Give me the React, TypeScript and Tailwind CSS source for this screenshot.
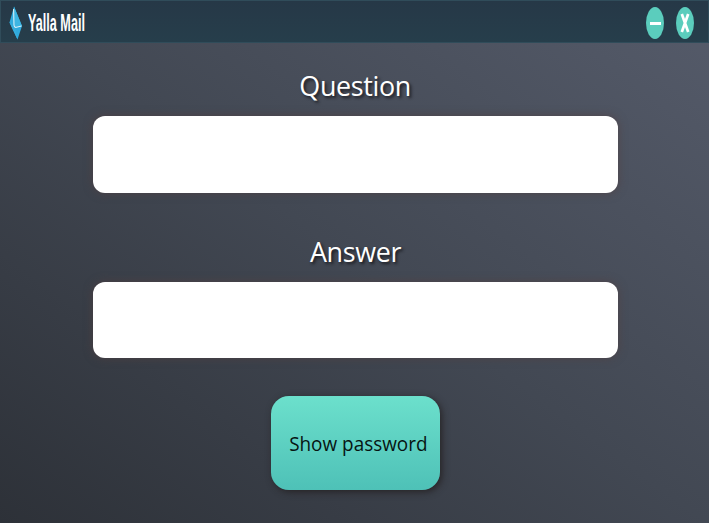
import React from "react";

function Logo() {
  return (
    <svg className="h-[34px] w-[13px] shrink-0" viewBox="0 0 13 34" aria-hidden="true">
      <path d="M5 0.5 L13 20 L8.5 33.5 L0.5 16.5 Z" fill="#2fa9dc" />
      <path d="M5 0.5 L13 20 L6 21 Z" fill="#3db5e2" />
      <path d="M0.5 16.5 L6 21 L8.5 33.5 Z" fill="#36addd" />
      <path d="M4.6 3 L5 19 Q5.4 21.8 7.4 21.3 L12.5 20" fill="none" stroke="#d9f2fb" strokeWidth="1.1" />
    </svg>
  );
}

function TitleBar() {
  return (
    <header className="flex h-[43px] shrink-0 items-start justify-between border border-[#304c5a] bg-linear-to-b from-[#263847] to-[#263e4b] pt-[5px] pl-2 pr-[14px]">
      <div className="flex items-start">
        <Logo />
        <span className="mt-[3px] ml-[6px] block origin-left scale-x-[0.55] whitespace-nowrap font-['Liberation_Sans',sans-serif] text-[23px] leading-[29px] font-bold text-white">
          Yalla Mail
        </span>
      </div>
      <div className="mt-px flex gap-3">
        <button aria-label="Minimize" className="flex h-8 w-[18px] items-center justify-center rounded-[50%] bg-[#5bcdbd]">
          <span className="mt-px h-[2.5px] w-[11px] bg-white" />
        </button>
        <button aria-label="Close" className="flex h-8 w-[18px] items-center justify-center rounded-[50%] bg-[#5bcdbd]">
          <svg className="h-5 w-[10px]" viewBox="0 0 10 20" aria-hidden="true">
            <path d="M1.8 1 L8.2 19 M8.2 1 L1.8 19" stroke="white" strokeWidth="2.7" />
          </svg>
        </button>
      </div>
    </header>
  );
}

function Field({ label, box }: { label: string; box: string }) {
  return (
    <label className="flex flex-col items-center">
      <span className="block scale-x-[0.96] whitespace-nowrap font-['Open_Sans','Noto_Sans',sans-serif] text-[28px] leading-10 tracking-[-0.35px] text-white [text-shadow:2px_2px_3px_rgba(20,20,25,0.85)]">
        {label}
      </span>
      <input className={`w-[525px] rounded-[12px] bg-white px-4 text-2xl text-black shadow-[0_0_10px_rgba(83,62,62,0.7)] outline-none ${box}`} />
    </label>
  );
}

export default function App() {
  return (
    <div className="flex h-[523px] w-[709px] flex-col overflow-hidden bg-[linear-gradient(to_top_right,#2d3138,#424853_50%,#555b6a)]">
      <TitleBar />
      <main className="flex flex-col items-center pt-[22px] pl-[2px]">
        <Field label="Question" box="mt-[11px] h-[77px]" />
        <div className="h-[38px]" />
        <Field label="Answer" box="mt-[11px] h-[76px]" />
        <button className="mt-[38px] flex h-[94px] w-[169px] items-center justify-center rounded-[18px] bg-linear-to-b from-[#6ce0cc] to-[#4ec1b7] pt-[2px] pl-[5px] shadow-[2px_2px_7px_rgba(35,30,32,0.85)]">
          <span className="block scale-x-[0.97] whitespace-nowrap font-['Open_Sans','Noto_Sans',sans-serif] text-[19.5px] text-[#071412]">Show password</span>
        </button>
      </main>
    </div>
  );
}
